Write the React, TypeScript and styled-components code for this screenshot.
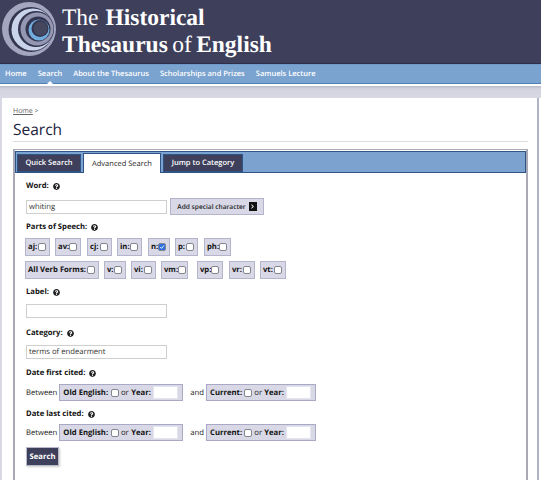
import styled, { createGlobalStyle } from 'styled-components'
import { FaQuestionCircle, FaChevronRight } from 'react-icons/fa'

const GlobalStyle = createGlobalStyle`
  html, body {
    margin: 0;
    padding: 0;
    background: #fff;
  }
  body {
    font-family: "Open Sans", "Liberation Sans", sans-serif;
    color: #111;
    overflow: hidden;
    text-rendering: geometricPrecision;
  }
`

const Page = styled.div`
  width: 541px;
  height: 480px;
  overflow: hidden;
`

const Banner = styled.header`
  height: 62px;
  background: #3e3f5b;
  border-bottom: 1px solid #2d2e47;
  display: flex;
  align-items: flex-start;
  padding: 1px 0 0 1px;
  gap: 5px;
`

const Logo = styled.svg`
  width: 56px;
  height: 56px;
  flex: none;
`

const Title = styled.div`
  font-family: "Liberation Serif", serif;
  font-size: 23.5px;
  line-height: 27px;
  color: #fff;
  padding-top: 4px;
  white-space: nowrap;
  b { font-weight: bold; }
`

const TitleLine = styled.div<{ $spacing: number }>`
  word-spacing: ${p => p.$spacing}px;
`

const Nav = styled.nav`
  height: 18px;
  background: #7ba3cf;
  border-top: 1px solid #6e99c8;
  border-bottom: 1px solid #4f7fb5;
  display: flex;
  align-items: center;
  gap: 11px;
  padding-left: 5px;
`

const NavItem = styled.a<{ $active?: boolean }>`
  position: relative;
  font-size: 7.5px;
  font-weight: 600;
  color: #fff;
  white-space: nowrap;
  ${p => p.$active && `
    &::after {
      content: '';
      position: absolute;
      left: 50%;
      bottom: -5px;
      margin-left: -3px;
      border: 3px solid transparent;
      border-top: 0;
      border-bottom-color: #fff;
    }
  `}
`

const Band = styled.div`
  margin-top: 2px;
  height: 12px;
  background: linear-gradient(#b9b9c9 0, #d3d3e0 3px, #d8d8e4 100%);
`

const Sheet = styled.main`
  margin-left: 2px;
  width: 537px;
  height: 383px;
  background: #fff;
  border-right: 2px solid #b2b2c6;
  padding: 9px 0 0 11px;
  box-sizing: border-box;
  box-shadow: -2px 0 0 #d8d8e4;
`

const Crumb = styled.div`
  font-size: 7px;
  line-height: 10px;
  color: #555;
  u { color: #666; }
`

const Heading = styled.h1`
  margin: 1px 0 0;
  padding-bottom: 1px;
  font-size: 15.5px;
  font-weight: 400;
  line-height: 22px;
  color: #1c2340;
  width: 515px;
  border-bottom: 1px solid #dcdcdc;
`

const Panel = styled.section`
  margin-top: 7px;
  width: 515px;
  border: 1px solid #a9a9b5;
  border-bottom: 0;
  border-left-width: 2px;
  border-right-width: 2px;
  box-sizing: border-box;
  height: 340px;
`

const TabBar = styled.div`
  margin: 1px 0 0 0;
  height: 22px;
  box-sizing: border-box;
  background: #7ca3cf;
  border: 1px solid #2f5587;
  display: flex;
  align-items: flex-end;
  gap: 2px;
  padding-left: 1px;
`

const Tab = styled.div<{ $active?: boolean; $width: number }>`
  height: ${p => (p.$active ? 20 : 18)}px;
  width: ${p => p.$width}px;
  box-sizing: border-box;
  display: flex;
  align-items: center;
  justify-content: center;
  font-size: 7.5px;
  font-weight: ${p => (p.$active ? 400 : 600)};
  white-space: nowrap;
  background: ${p => (p.$active ? '#fff' : '#3e3f5b')};
  color: ${p => (p.$active ? '#222' : '#fff')};
  border: 1px solid #2f5587;
  border-bottom: ${p => (p.$active ? '0' : '1px solid #2f5587')};
  margin-bottom: ${p => (p.$active ? '-1px' : '0')};
`

const Form = styled.form`
  padding: 7px 0 0 10px;
  display: flex;
  flex-direction: column;
  align-items: flex-start;
`

const Label = styled.div<{ $top: number }>`
  margin: ${p => p.$top}px 0 0 1px;
  font-size: 7.7px;
  font-weight: 700;
  line-height: 12px;
  display: flex;
  align-items: center;
  gap: 4px;
  color: #111;
  svg { width: 7px; height: 7px; color: #222; }
`

const Row = styled.div<{ $top: number }>`
  margin-top: ${p => p.$top}px;
  display: flex;
  align-items: center;
`

const TextBox = styled.div`
  width: 141px;
  height: 14px;
  box-sizing: border-box;
  border: 1px solid #cfcfcf;
  margin-left: 1px;
  background: #fff;
  font-size: 7.7px;
  line-height: 12px;
  padding-left: 2px;
  color: #333;
`

const SpecialButton = styled.div`
  margin-left: 3px;
  width: 94px;
  height: 17px;
  box-sizing: border-box;
  background: #d8d8e6;
  border: 1px solid #b4b4cc;
  display: flex;
  align-items: center;
  justify-content: center;
  gap: 3px;
  font-size: 6.6px;
  font-weight: 600;
  color: #222;
  white-space: nowrap;
`

const ArrowBox = styled.span`
  width: 8px;
  height: 9px;
  background: #111;
  color: #fff;
  display: flex;
  align-items: center;
  justify-content: center;
  svg { width: 5px; height: 5px; }
`

const Chip = styled.div<{ $left: number; $width: number }>`
  margin-left: ${p => p.$left}px;
  width: ${p => p.$width}px;
  height: 18px;
  box-sizing: border-box;
  background: #d8d8e6;
  border: 1px solid #b4b4cc;
  display: flex;
  align-items: center;
  justify-content: space-between;
  padding: 0 3px 0 2px;
  font-size: 7.7px;
  font-weight: 700;
  white-space: nowrap;
`

const Box = styled.span<{ $checked?: boolean }>`
  width: 6px;
  height: 6px;
  flex: none;
  border: 1px solid #85858f;
  border-radius: 2px;
  background: ${p => (p.$checked ? '#2b6fe0' : '#fff')};
  display: inline-flex;
  align-items: center;
  justify-content: center;
  box-sizing: content-box;
  svg { width: 6px; height: 6px; }
`

const Plain = styled.span<{ $left?: number }>`
  margin-left: ${p => p.$left ?? 0}px;
  font-size: 7.7px;
  font-weight: 400;
  color: #222;
`

const DateGroup = styled.div<{ $width: number }>`
  margin-left: 2px;
  width: ${p => p.$width}px;
  height: 17px;
  box-sizing: border-box;
  background: #d8d8e6;
  border: 1px solid #a9a9c6;
  display: flex;
  align-items: center;
  justify-content: space-between;
  padding: 0 4px 0 3px;
  font-size: 7.7px;
  font-weight: 700;
  white-space: nowrap;
`

const YearBox = styled.span`
  width: 25px;
  height: 13px;
  background: #fff;
  border: 1px solid #e4e4ee;
  box-sizing: border-box;
`

const SearchButton = styled.div`
  margin: 6px 0 0 1px;
  width: 33px;
  height: 19px;
  box-sizing: border-box;
  background: #3e3f5b;
  border: 1px solid #b9b9cc;
  box-shadow: 1px 1px 2px #ccc;
  color: #fff;
  font-size: 7.7px;
  font-weight: 700;
  display: flex;
  align-items: center;
  justify-content: center;
`

const Help = () => <FaQuestionCircle />

const Check = () => (
  <svg viewBox="0 0 10 10">
    <path d="M2 5.2 L4.2 7.4 L8 2.6" fill="none" stroke="#fff" strokeWidth="1.6" />
  </svg>
)

const speech: [string, number, number, boolean?][] = [
  ['aj:', 0, 25], ['av:', 5, 26], ['cj:', 6, 25], ['in:', 5, 25],
  ['n:', 6, 22, true], ['p:', 5, 23], ['ph:', 6, 27],
]

const verbs: [string, number, number][] = [
  ['All Verb Forms:', 0, 74], ['v:', 5, 22], ['vi:', 5, 25], ['vm:', 5, 27],
  ['vp:', 9, 26], ['vr:', 6, 26], ['vt:', 5, 26],
]

const DateRow = ({ top }: { top: number }) => (
  <Row $top={top}>
    <Plain $left={1}>Between</Plain>
    <DateGroup $width={124}>
      <span>Old English:</span> <Box /> <Plain>or</Plain> <span>Year:</span> <YearBox />
    </DateGroup>
    <Plain $left={7}>and</Plain>
    <DateGroup $width={110}>
      <span>Current:</span> <Box /> <Plain>or</Plain> <span>Year:</span> <YearBox />
    </DateGroup>
  </Row>
)

export default function App() {
  return (
    <Page>
      <GlobalStyle />
      <Banner>
        <Logo viewBox="0 0 56 56">
          <circle cx="28" cy="28" r="27" fill="#a2a6bf" />
          <circle cx="30" cy="28.5" r="22.5" fill="#33344f" />
          <circle cx="31.5" cy="28.5" r="21" fill="#c9d4ea" />
          <circle cx="35" cy="28" r="18" fill="#33344f" />
          <circle cx="36" cy="28" r="16.5" fill="#9397b2" />
          <circle cx="37" cy="28" r="12.5" fill="#33344f" />
          <circle cx="38" cy="29" r="10.5" fill="#70acdc" />
          <circle cx="39" cy="27.5" r="8.5" fill="#33344f" />
          <circle cx="39.5" cy="27.5" r="7" fill="#45475f" />
        </Logo>
        <Title>
          <TitleLine $spacing={1}>The <b>Historical</b></TitleLine>
          <TitleLine $spacing={-1.5}><b>Thesaurus</b> of <b>English</b></TitleLine>
        </Title>
      </Banner>
      <Nav>
        <NavItem>Home</NavItem>
        <NavItem $active>Search</NavItem>
        <NavItem>About the Thesaurus</NavItem>
        <NavItem>Scholarships and Prizes</NavItem>
        <NavItem>Samuels Lecture</NavItem>
      </Nav>
      <Band />
      <Sheet>
        <Crumb><u>Home</u> &gt;</Crumb>
        <Heading>Search</Heading>
        <Panel>
          <TabBar>
            <Tab $width={64}>Quick Search</Tab>
            <Tab $width={78} $active>Advanced Search</Tab>
            <Tab $width={80}>Jump to Category</Tab>
          </TabBar>
          <Form>
            <Label $top={0}>Word: <Help /></Label>
            <Row $top={6}>
              <TextBox>whiting</TextBox>
              <SpecialButton>Add special character <ArrowBox><FaChevronRight /></ArrowBox></SpecialButton>
            </Row>
            <Label $top={6}>Parts of Speech: <Help /></Label>
            <Row $top={5}>
              {speech.map(([name, left, width, checked]) => (
                <Chip key={name} $left={left} $width={width}>
                  {name} <Box $checked={checked}>{checked && <Check />}</Box>
                </Chip>
              ))}
            </Row>
            <Row $top={5}>
              {verbs.map(([name, left, width]) => (
                <Chip key={name} $left={left} $width={width}>
                  {name} <Box />
                </Chip>
              ))}
            </Row>
            <Label $top={7}>Label: <Help /></Label>
            <Row $top={6}><TextBox /></Row>
            <Label $top={9}>Category: <Help /></Label>
            <Row $top={6}><TextBox>terms of endearment</TextBox></Row>
            <Label $top={8}>Date first cited: <Help /></Label>
            <DateRow top={5} />
            <Label $top={7}>Date last cited: <Help /></Label>
            <DateRow top={4} />
            <SearchButton>Search</SearchButton>
          </Form>
        </Panel>
      </Sheet>
    </Page>
  )
}
